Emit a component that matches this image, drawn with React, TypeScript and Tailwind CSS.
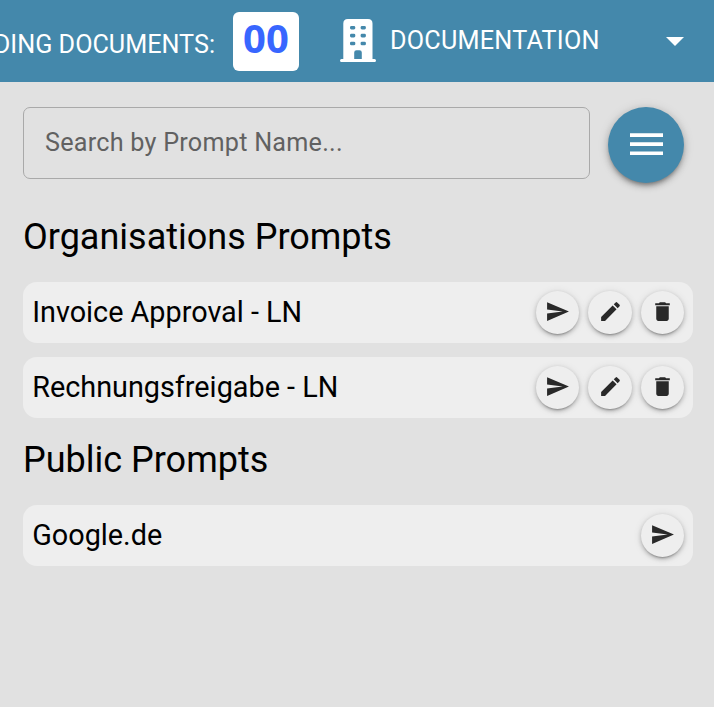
import type { ReactNode } from "react";

const SEND = "M2.01 21 23 12 2.01 3 2 10l15 2-15 2z";
const EDIT = "M3 17.25V21h3.75L17.81 9.94l-3.75-3.75zM20.71 7.04c.39-.39.39-1.02 0-1.41l-2.34-2.34a.996.996 0 0 0-1.41 0l-1.83 1.83 3.75 3.75z";
const TRASH = "M6 19c0 1.1.9 2 2 2h8c1.1 0 2-.9 2-2V7H6zM19 4h-3.5l-1-1h-5l-1 1H5v2h14z";

function RoundButton({ label, path }: { label: string; path: string }) {
  return (
    <button
      aria-label={label}
      className="flex size-[43.2px] items-center justify-center rounded-full bg-[#eeeeee] pb-[1.4px] text-[#292929] shadow-[0_3px_2px_-2px_rgba(0,0,0,0.25),0_2px_4px_rgba(0,0,0,0.22),0_1px_8px_rgba(0,0,0,0.1)]"
    >
      <svg viewBox="0 0 24 24" className="size-[25px] fill-current">
        <path d={path} />
      </svg>
    </button>
  );
}

function PromptRow({ name, children }: { name: string; children: ReactNode }) {
  return (
    <li className="flex h-[61px] items-center justify-between rounded-[14px] bg-[#eeeeee] pr-[9px] pl-[9.2px]">
      <span className="text-[28.8px] leading-[61px]">{name}</span>
      <span className="flex gap-[9.2px]">{children}</span>
    </li>
  );
}

function Building() {
  return (
    <svg viewBox="0 0 36 43" className="h-[43px] w-9 shrink-0">
      <path
        fill="white"
        fillRule="evenodd"
        d="M3.3 40V4.5Q3.3 0 7.8 0H28Q32.5 0 32.5 4.5V40H34.5Q36 40 36 41.5T34.5 43H1.5Q0 43 0 41.5T1.5 40ZM14.2 40H21.8V33.5Q21.8 31.2 19.5 31.2H16.5Q14.2 31.2 14.2 33.5Z"
      />
      <g fill="#4488ab">
        <rect x="10" y="7" width="5.3" height="3.4" rx="1.4" />
        <rect x="20.6" y="7" width="5.3" height="3.4" rx="1.4" />
        <rect x="10" y="14.8" width="5.3" height="3.6" rx="1.4" />
        <rect x="20.6" y="14.8" width="5.3" height="3.6" rx="1.4" />
        <rect x="10" y="22.7" width="5.3" height="3.6" rx="1.4" />
        <rect x="20.6" y="22.7" width="5.3" height="3.6" rx="1.4" />
      </g>
    </svg>
  );
}

export default function App() {
  return (
    <div className="h-[707px] w-[714px] overflow-hidden bg-[#e1e1e1] font-['Roboto',sans-serif] text-black">
      <header className="flex h-[82px] items-start bg-[#4488ab] text-[25.2px] text-white">
        <div className="flex h-full w-[215px] shrink-0 justify-end pt-[30px] leading-[30px] whitespace-nowrap">
          PENDING DOCUMENTS:
        </div>
        <div className="mt-3 ml-[18px] flex h-[59px] w-[66px] shrink-0 justify-center rounded-md bg-white pt-[1px] font-['Noto_Sans',sans-serif] text-[40px] leading-[50px] font-bold text-[#3866ff]">
          00
        </div>
        <div className="mt-[19px] ml-[41px] flex">
          <Building />
          <span className="ml-[14px] pt-[7px] leading-[30px] tracking-[0.24px]">DOCUMENTATION</span>
        </div>
        <svg viewBox="0 0 18 9" className="mt-[37px] mr-[30px] ml-auto h-[9px] w-[18px] fill-white">
          <path d="M0 0H18L9 9Z" />
        </svg>
      </header>
      <main className="pt-[25px] pr-[21px] pl-[23px]">
        <div className="flex gap-[18px]">
          <input
            placeholder="Search by Prompt Name..."
            className="h-[72px] w-[567px] rounded-[7px] border border-[#a9a9a9] bg-transparent px-[21px] pb-[2px] text-[25.2px] tracking-[0.24px] outline-none placeholder:text-[#616161]"
          />
          <button
            aria-label="Menu"
            className="flex size-[76px] items-center justify-center rounded-full bg-[#4488ab] pb-px text-white shadow-[0_4px_4px_-2px_rgba(0,0,0,0.3),0_3px_7px_rgba(0,0,0,0.2),0_1px_12px_rgba(0,0,0,0.12)]"
          >
            <svg viewBox="0 0 33 23" className="h-[23px] w-[33px] fill-current">
              <path d="M0 0.3h33v3.7H0zM0 9.3h33v3.7H0zM0 18.4h33v3.7H0z" />
            </svg>
          </button>
        </div>
        <h2 className="mt-[32px] text-[36px] leading-[44px]">Organisations Prompts</h2>
        <ul className="mt-[23px] flex flex-col gap-[14px]">
          <PromptRow name="Invoice Approval - LN">
            <RoundButton label="Send" path={SEND} />
            <RoundButton label="Edit" path={EDIT} />
            <RoundButton label="Delete" path={TRASH} />
          </PromptRow>
          <PromptRow name="Rechnungsfreigabe - LN">
            <RoundButton label="Send" path={SEND} />
            <RoundButton label="Edit" path={EDIT} />
            <RoundButton label="Delete" path={TRASH} />
          </PromptRow>
        </ul>
        <h2 className="mt-[20px] text-[36px] leading-[44px]">Public Prompts</h2>
        <ul className="mt-[23px]">
          <PromptRow name="Google.de">
            <RoundButton label="Send" path={SEND} />
          </PromptRow>
        </ul>
      </main>
    </div>
  );
}
